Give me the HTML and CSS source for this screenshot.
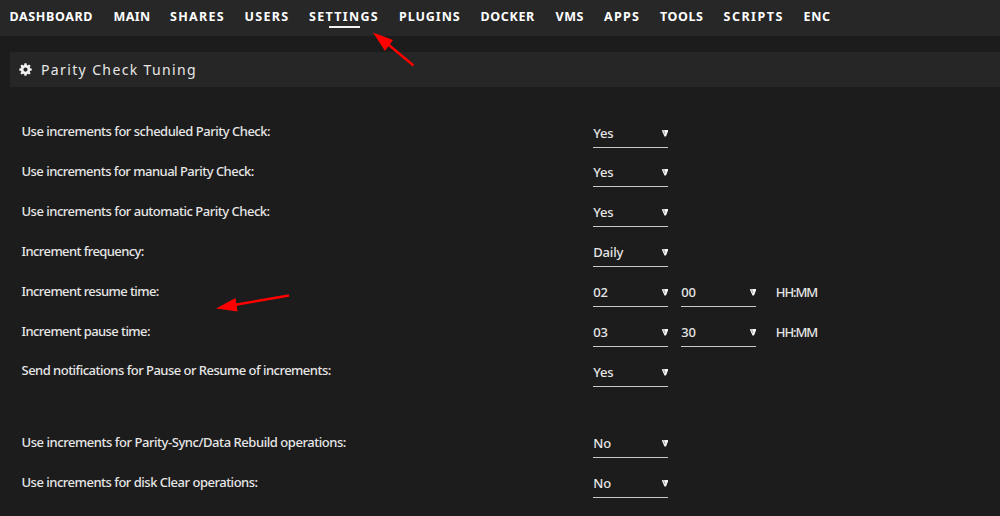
FILE: index.html
```html
<!DOCTYPE html>
<html lang="en">
<head>
<meta charset="utf-8">
<title>Parity Check Tuning</title>
<link rel="stylesheet" href="styles.css">
</head>
<body>
<svg class="defs" width="0" height="0" aria-hidden="true">
<symbol id="caret" viewBox="0 0 6 7"><path d="M0 0H6V1.500L4 6.500H2.500L.3 1.500Z" fill="#f2f2f2"/><path d="M1.700 0L2.800 4" stroke="#1c1c1c" stroke-width=".6" opacity=".6"/></symbol>
</svg>
<nav class="menu">
<a class="dashboard">DASHBOARD</a><a class="main">MAIN</a><a>SHARES</a><a>USERS</a><a class="active">SETTINGS</a><a class="plugins">PLUGINS</a><a class="docker">DOCKER</a><a class="vms">VMS</a><a>APPS</a><a class="tools">TOOLS</a><a class="scripts">SCRIPTS</a><a class="enc">ENC</a>
</nav>
<header class="title">
<svg class="gear" viewBox="0 0 14 14"><path fill="#f2f2f2" fill-rule="evenodd" d="M5.9 .4H8.1L8.5 2.2L9.4 2.6L11 1.6L12.5 3.1L11.5 4.7L11.9 5.6L13.7 6V8.1L11.9 8.5L11.5 9.4L12.5 11L11 12.5L9.4 11.5L8.5 11.9L8.1 13.7H5.9L5.5 11.9L4.6 11.5L3 12.5L1.5 11L2.5 9.4L2.1 8.5L.3 8.1V6L2.1 5.6L2.5 4.7L1.5 3.1L3 1.6L4.6 2.6L5.5 2.2ZM7 4.8A2.25 2.25 0 1 0 7 9.3A2.25 2.25 0 1 0 7 4.8Z"/></svg>
<h1>Parity Check Tuning</h1>
</header>
<main class="form">
<div class="row"><label class="l1">Use increments for scheduled Parity Check:</label><div class="select">Yes<svg><use href="#caret"/></svg></div></div>
<div class="row"><label class="l2">Use increments for manual Parity Check:</label><div class="select">Yes<svg><use href="#caret"/></svg></div></div>
<div class="row"><label class="l3">Use increments for automatic Parity Check:</label><div class="select">Yes<svg><use href="#caret"/></svg></div></div>
<div class="row"><label class="l4">Increment frequency:</label><div class="select">Daily<svg><use href="#caret"/></svg></div></div>
<div class="row"><label class="l5">Increment resume time:</label><div class="select">02<svg><use href="#caret"/></svg></div><div class="select">00<svg><use href="#caret"/></svg></div><span class="unit">HH:MM</span></div>
<div class="row"><label class="l6">Increment pause time:</label><div class="select">03<svg><use href="#caret"/></svg></div><div class="select">30<svg><use href="#caret"/></svg></div><span class="unit">HH:MM</span></div>
<div class="row"><label class="l7">Send notifications for Pause or Resume of increments:</label><div class="select">Yes<svg><use href="#caret"/></svg></div></div>
<div class="row section"><label class="l8">Use increments for Parity-Sync/Data Rebuild operations:</label><div class="select">No<svg><use href="#caret"/></svg></div></div>
<div class="row"><label class="l9">Use increments for disk Clear operations:</label><div class="select">No<svg><use href="#caret"/></svg></div></div>
</main>
<svg class="arrows" viewBox="0 0 1000 516" aria-hidden="true">
<g fill="#f00" stroke="#f00"><path d="M413.500 65.500L387 43.500" stroke-width="2.4"/><path stroke="none" d="M373 32.5L393 40L385 51Z"/>
<path d="M289 295.5L234 305" stroke-width="2.4"/><path stroke="none" d="M216 308.5L235.5 298L237.500 311.500Z"/></g>
</svg>
</body>
</html>
```

FILE: styles.css
```css
* { box-sizing: border-box; }
body { margin: 0; height: 516px; overflow: hidden; background: #1c1c1c; color: #e6e6e6; font: 500 13px/20px "Noto Sans", sans-serif; }
.defs { position: absolute; }
.menu {
  display: grid;
  grid-template-columns: 104px 56.500px 74.500px 64.500px 90px 81.500px 75px 48.500px 56px 63.500px 80px 60px;
  height: 36px;
  padding: 7px 0 0 9.500px;
  background: #272727;
  color: #fff;
  font-weight: 700;
  font-size: 12.500px;
  letter-spacing: 1.3px;
  white-space: nowrap;
}
.dashboard { letter-spacing: .62px; }
.main { letter-spacing: .4px; }
.plugins { letter-spacing: .93px; }
.docker { letter-spacing: .63px; }
.vms { letter-spacing: .5px; }
.tools { letter-spacing: .55px; }
.scripts { letter-spacing: 1.5px; }
.enc { letter-spacing: .65px; }
.active { display: flex; flex-direction: column; }
.active::after { content: ""; width: 31px; height: 2px; margin: -1px 0 0 19.500px; background: #f2f2f2; }
.title { display: flex; align-items: center; height: 35px; margin: 16px 0 0 10px; padding-left: 9px; background: #262626; }
.gear { width: 13px; height: 13px; margin: 0 9px 1px 0; }
h1 { margin: 0; font-size: 14px; font-weight: 400; letter-spacing: 1.37px; }
.form { padding: 24.500px 0 0 21.500px; }
.row { display: flex; height: 39.900px; }
.row.section { margin-top: 31.500px; }
label { width: 571.800px; padding-top: 9.600px; white-space: nowrap; letter-spacing: -.49px; }
.l2, .l7 { letter-spacing: -.52px; }
.l4, .l5, .l6 { letter-spacing: -.59px; }
.l8 { letter-spacing: -.45px; }
.select { display: flex; justify-content: space-between; width: 75px; height: 36px; margin-right: 13px; padding-top: 11px; border-bottom: 1px solid #c8c8c8; letter-spacing: -.2px; }
.select svg { width: 6px; height: 7px; margin-top: 7px; }
.unit { padding: 11px 0 0 6.500px; letter-spacing: -1.1px; }
.arrows { position: absolute; left: 0; top: 0; width: 1000px; height: 516px; pointer-events: none; }
```
